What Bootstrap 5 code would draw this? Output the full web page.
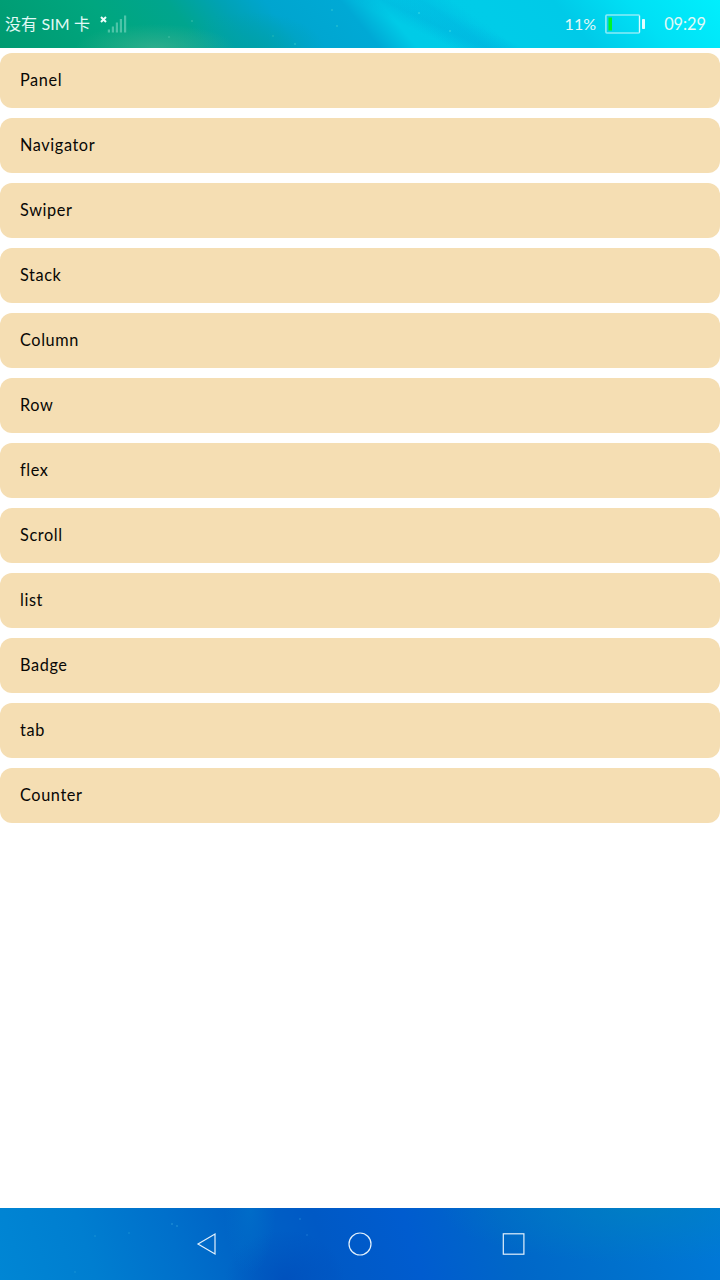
<!DOCTYPE html>
<html lang="zh-CN">
<head>
<meta charset="utf-8">
<meta name="viewport" content="width=device-width, initial-scale=1">
<title>Components</title>
<link href="https://cdn.jsdelivr.net/npm/bootstrap@5.3.0/dist/css/bootstrap.min.css" rel="stylesheet">
<style>
body{font-family:Lato,"Noto Sans CJK SC",sans-serif;font-size:16.3px;line-height:24px;color:#080705}
.status-bar{height:48px;padding:0 14px 0 5px;color:#e2f9f6;
background:
radial-gradient(circle 1px at 337px 26px,#4fd9d0,transparent),
radial-gradient(circle 1px at 332px 10px,#4fd9d0,transparent),
radial-gradient(circle 1px at 295px 44px,#4fd9d0,transparent),
radial-gradient(circle 1px at 273px 36px,#38c4b4,transparent),
radial-gradient(circle 1px at 450px 31px,#5ff0ea,transparent),
radial-gradient(circle 1px at 419px 13px,#5ff0ea,transparent),
radial-gradient(circle 1px at 169px 37px,#5fd0b4,transparent),
radial-gradient(circle 1px at 192px 21px,#5fd0b4,transparent),
radial-gradient(ellipse 80px 24px at 155px 48px,rgba(75,178,145,.6),transparent),
radial-gradient(ellipse 75px 38px at 250px 50px,rgba(0,160,165,.75),transparent),
linear-gradient(215deg,transparent 34%,rgba(0,175,222,.35) 38%,transparent 43%),
linear-gradient(205deg,transparent 36%,rgba(0,165,215,.3) 41%,transparent 45%),
linear-gradient(50deg,#009a70 0,#00a67f 17%,#00a58e 27%,#00a2b4 34%,#00a5cf 40%,#00a9d5 50%,#00cbe7 55%,#00cce8 68%,#00cae8 78%,#00e0f5 88%,#00effd 100%)}
.nav-keys{height:72px;
background:
radial-gradient(circle 1px at 95px 28px,#259fd8,transparent),
radial-gradient(circle 1px at 129px 25px,#259fd8,transparent),
radial-gradient(circle 1px at 172px 16px,#3faee0,transparent),
radial-gradient(circle 1px at 177px 18px,#3faee0,transparent),
radial-gradient(circle 1px at 75px 64px,#259fd8,transparent),
radial-gradient(circle 1px at 307px 27px,#2a86da,transparent),
radial-gradient(circle 1px at 300px 11px,#2a96da,transparent),
radial-gradient(ellipse 26px 66px at 250px 0,rgba(0,125,205,.4),transparent),
radial-gradient(ellipse 60px 50px at 285px 72px,rgba(0,68,182,.5),transparent),
radial-gradient(ellipse 200px 55px at 640px 0,rgba(0,132,190,.6),transparent),
linear-gradient(72deg,#0086d4 0,#007ed0 13%,#0070cb 25%,#0062c5 35%,#0059c5 45%,#005ccf 57%,#0067c8 70%,#0070cc 83%,#0079d8 100%)}
.item-row{height:55px;padding:0 20px 1px;border-radius:12px;background:#f5deb3;letter-spacing:.6px}
.item-list{gap:10px;padding-top:5px}
.sim-text{width:95px;font-size:16px;letter-spacing:.1px}
.percent{font-size:16px;margin-right:9px}
.clock{width:42px;margin-left:18px}
</style>
</head>
<body class="vh-100 d-flex flex-column bg-white overflow-hidden">
<header class="status-bar d-flex align-items-center flex-shrink-0">
  <span class="sim-text text-nowrap">没有 SIM 卡</span>
  <svg width="28" height="20" viewBox="100 14 28 20" fill="none">
    <path d="M101 17l5 5M106 17l-5 5" stroke="#edfffb" stroke-width="2"/>
    <g fill="#9fe5d3" opacity=".48">
      <rect x="107.8" y="29.5" width="2.2" height="3"/><rect x="111.8" y="26.5" width="2.2" height="6"/><rect x="115.8" y="22.5" width="2.2" height="10"/><rect x="119.8" y="19" width="2.2" height="13.5"/><rect x="124" y="15.5" width="2.2" height="17"/>
    </g>
  </svg>
  <span class="ms-auto percent">11%</span>
  <svg width="41" height="20" viewBox="605 14 41 20" fill="none">
    <rect x="605.9" y="15" width="33.6" height="18" rx="1" stroke="#8cecf8" stroke-width="1.6"/>
    <path d="M639.5 16v16.5" stroke="#d5fbff"/>
    <rect x="608.5" y="17.5" width="3.5" height="13" fill="#00f525"/>
    <rect x="642" y="19" width="3" height="10" rx=".7" fill="#e4fcff"/>
  </svg>
  <span class="clock text-end text-nowrap">09:29</span>
</header>
<main class="item-list d-flex flex-column flex-grow-1">
  <div class="item-row d-flex align-items-center">Panel</div>
  <div class="item-row d-flex align-items-center">Navigator</div>
  <div class="item-row d-flex align-items-center">Swiper</div>
  <div class="item-row d-flex align-items-center">Stack</div>
  <div class="item-row d-flex align-items-center">Column</div>
  <div class="item-row d-flex align-items-center">Row</div>
  <div class="item-row d-flex align-items-center">flex</div>
  <div class="item-row d-flex align-items-center">Scroll</div>
  <div class="item-row d-flex align-items-center">list</div>
  <div class="item-row d-flex align-items-center">Badge</div>
  <div class="item-row d-flex align-items-center">tab</div>
  <div class="item-row d-flex align-items-center">Counter</div>
</main>
<footer class="nav-keys flex-shrink-0">
  <svg class="d-block" width="720" height="72" fill="none" stroke="#e3f1fc" stroke-width="1.2">
    <path d="M198 36L215 26V46Z"/><circle cx="360" cy="36" r="11"/><rect x="503.3" y="25.8" width="20.6" height="20.4"/>
  </svg>
</footer>
<script src="https://cdn.jsdelivr.net/npm/bootstrap@5.3.0/dist/js/bootstrap.bundle.min.js"></script>
</body>
</html>
